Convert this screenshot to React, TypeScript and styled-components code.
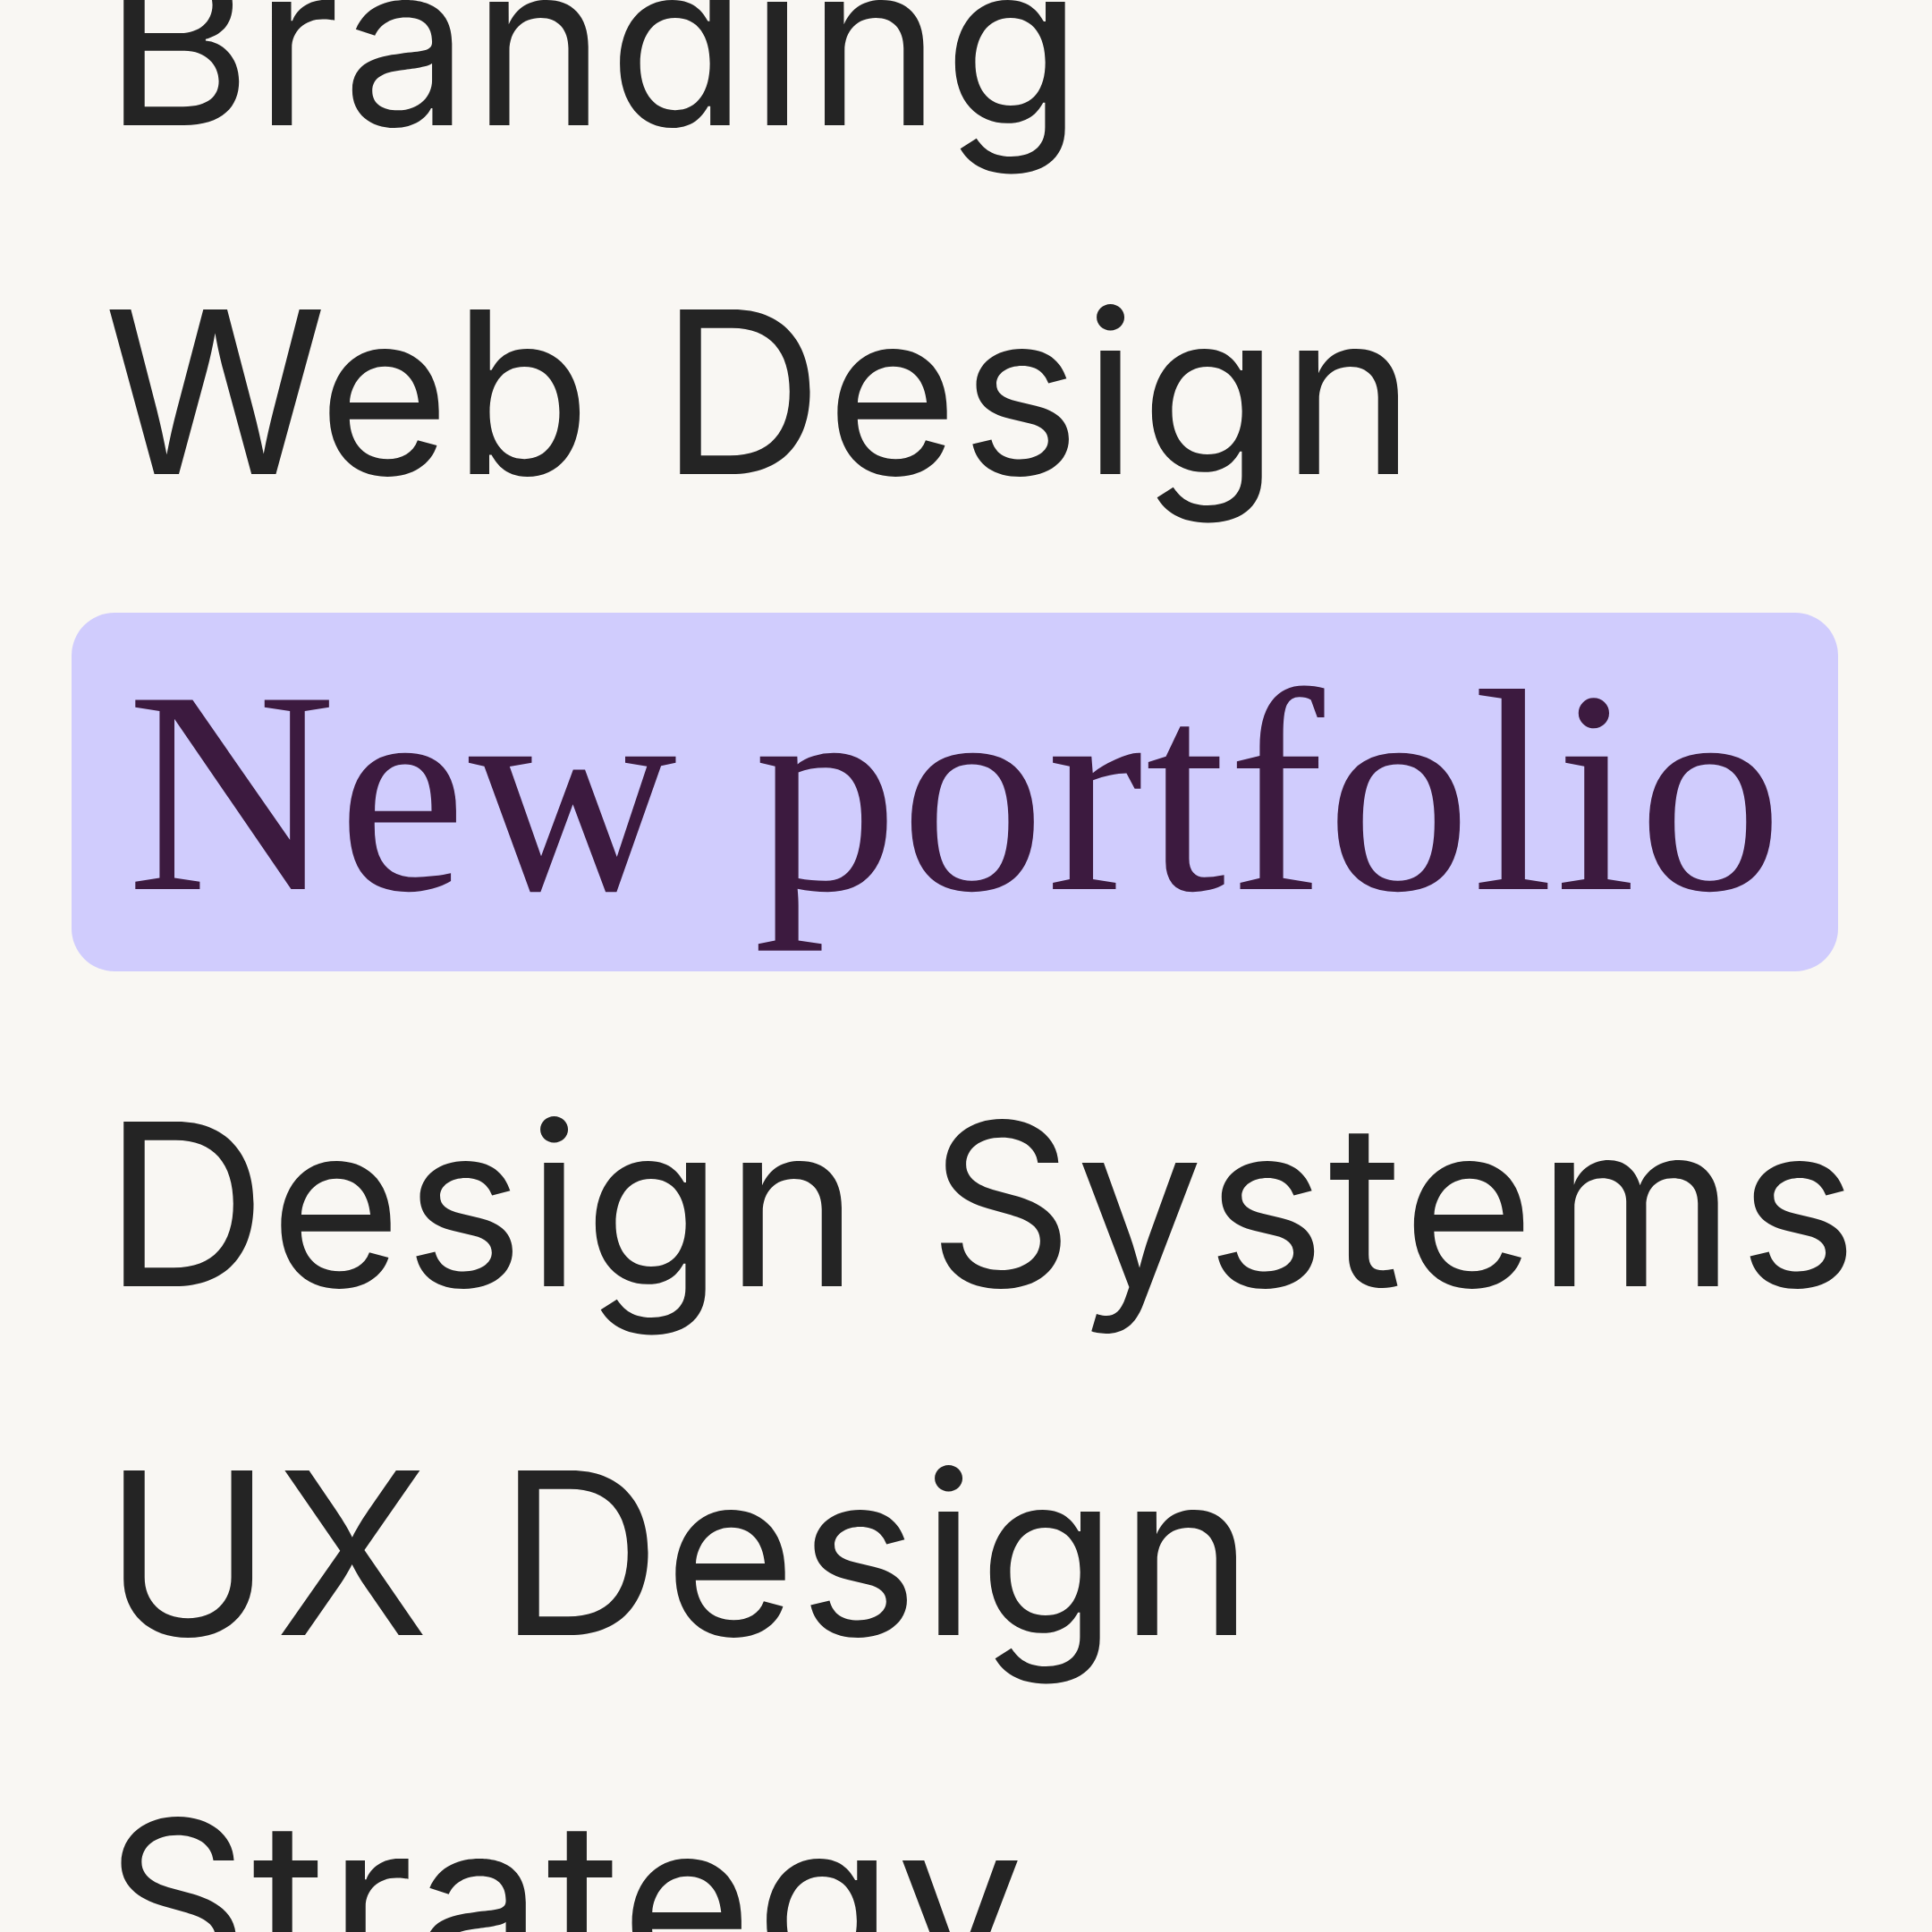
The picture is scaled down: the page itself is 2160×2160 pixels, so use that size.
import React from "react";
import styled, { createGlobalStyle } from "styled-components";

const Global = createGlobalStyle`
  html, body {
    margin: 0;
    padding: 0;
    background: #f9f7f3;
  }
  #root {
    height: 100vh;
  }
`;

const Viewport = styled.main`
  height: 100vh;
  overflow: hidden;
  background: #f9f7f3;
`;

const List = styled.ul`
  list-style: none;
  margin: -147px 0 0 0;
  padding: 0;
  display: flex;
  flex-direction: column;
`;

const Item = styled.li`
  height: 390px;
  padding-left: 116px;
  font-family: "Inter", "Liberation Sans", sans-serif;
  font-size: 253px;
  line-height: 390px;
  font-weight: 400;
  letter-spacing: 3px;
  color: #242424;
  white-space: nowrap;
`;

const ActiveItem = styled.li`
  height: 401px;
  margin: 52px 105px 65px 80px;
  padding-left: 62px;
  border-radius: 48px;
  background: #d0ccfd;
  font-family: "Liberation Serif", "Times New Roman", serif;
  font-size: 323px;
  line-height: 401px;
  font-weight: 400;
  letter-spacing: 2.5px;
  color: #3c1a3f;
  white-space: nowrap;
`;

const items = [
  { label: "Branding" },
  { label: "Web Design" },
  { label: "New portfolio", active: true },
  { label: "Design Systems" },
  { label: "UX Design" },
  { label: "Strategy" },
];

export default function App() {
  return (
    <Viewport>
      <Global />
      <List>
        {items.map((it) =>
          it.active ? (
            <ActiveItem key={it.label}>{it.label}</ActiveItem>
          ) : (
            <Item key={it.label}>{it.label}</Item>
          )
        )}
      </List>
    </Viewport>
  );
}
